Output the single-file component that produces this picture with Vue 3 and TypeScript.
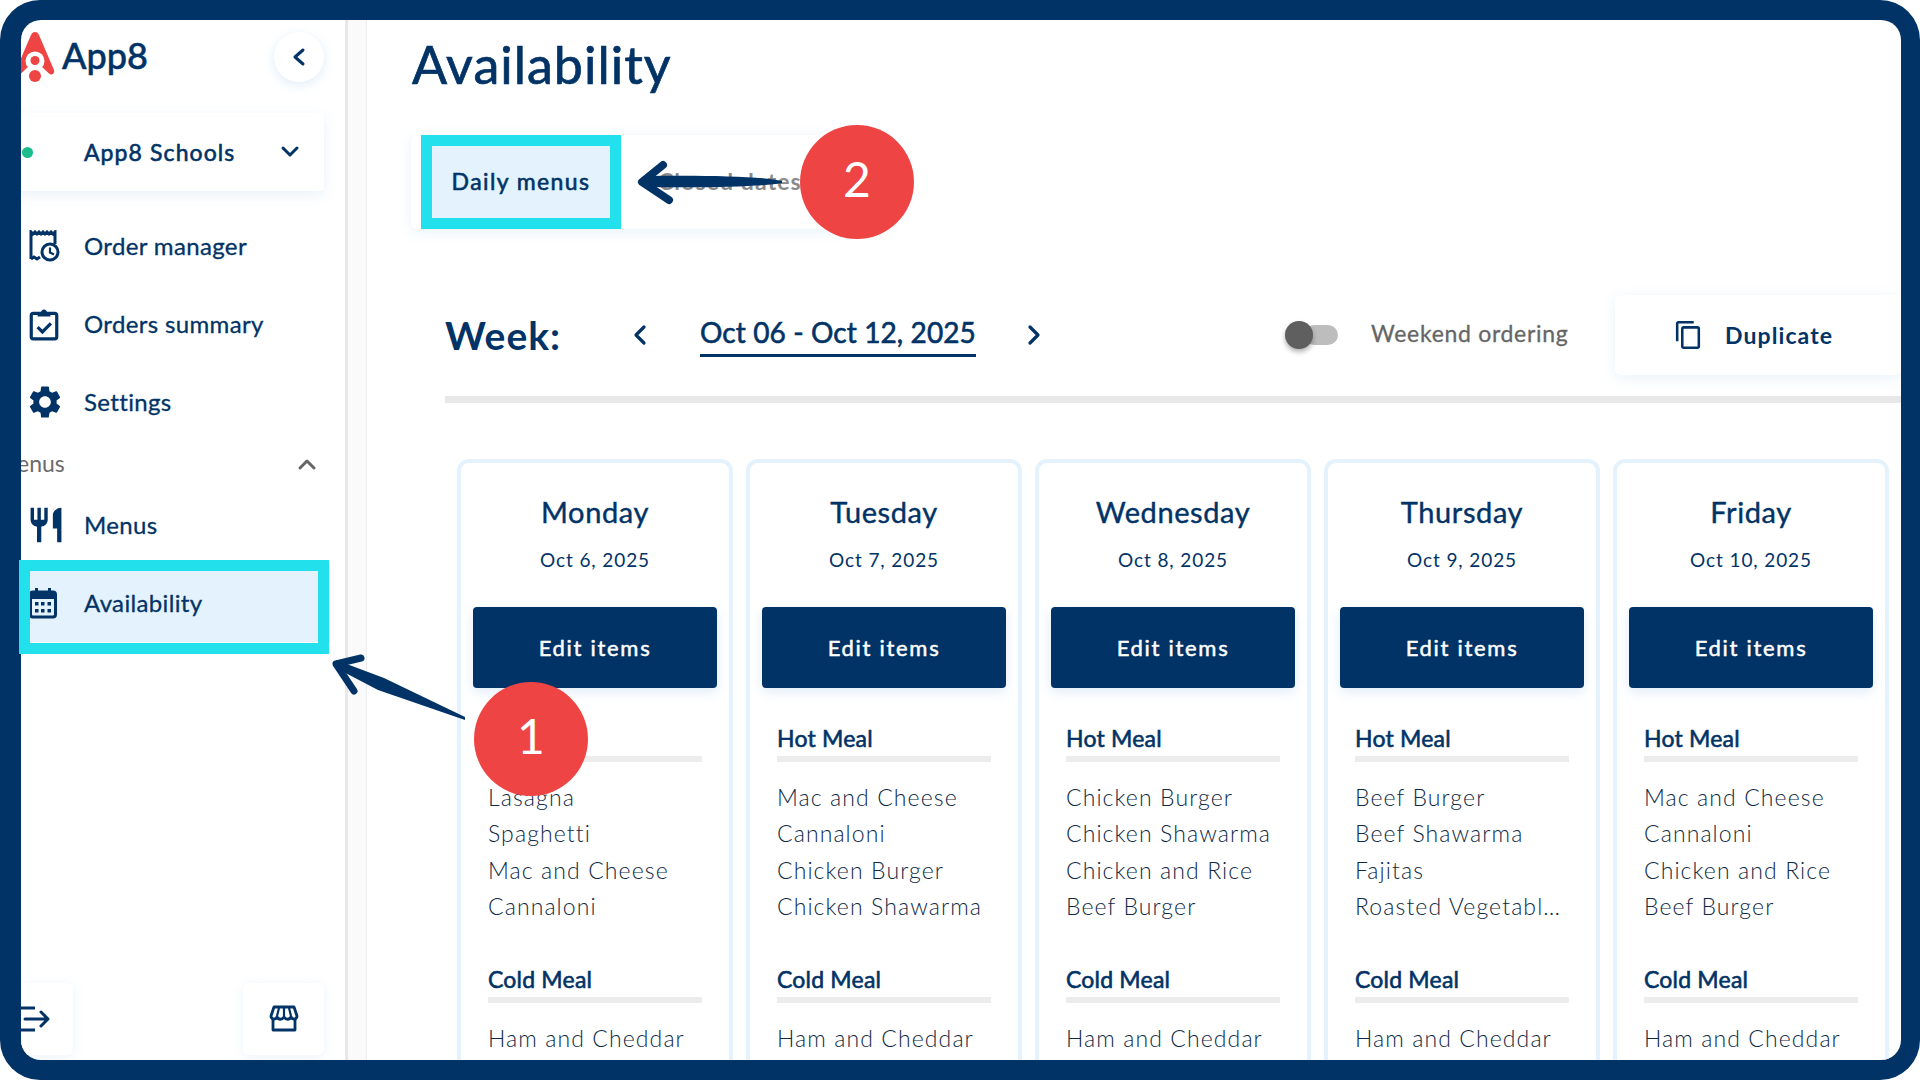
<script setup lang="ts">
const navItems = [
  { label: 'Order manager', icon: 'receipt' },
  { label: 'Orders summary', icon: 'clipboard' },
  { label: 'Settings', icon: 'gear' },
]
const days = [
  { name: 'Monday', date: 'Oct 6, 2025', hot: ['Lasagna', 'Spaghetti', 'Mac and Cheese', 'Cannaloni'] },
  { name: 'Tuesday', date: 'Oct 7, 2025', hot: ['Mac and Cheese', 'Cannaloni', 'Chicken Burger', 'Chicken Shawarma'] },
  { name: 'Wednesday', date: 'Oct 8, 2025', hot: ['Chicken Burger', 'Chicken Shawarma', 'Chicken and Rice', 'Beef Burger'] },
  { name: 'Thursday', date: 'Oct 9, 2025', hot: ['Beef Burger', 'Beef Shawarma', 'Fajitas', 'Roasted Vegetabl…'] },
  { name: 'Friday', date: 'Oct 10, 2025', hot: ['Mac and Cheese', 'Cannaloni', 'Chicken and Rice', 'Beef Burger'] },
]
</script>

<template>
  <div class="outer">
    <div class="frame">
      <aside class="sidebar">
        <div class="head">
          <div class="logo">
            <svg class="rocket" width="34" height="52" viewBox="0 0 34 52">
              <path d="M15 1C17 1 18 2 19 4L34 39C35 43 31.500 45 29 42.500L22 36H8L1 42.500C-1.500 45 -5 43 -4 39L11 4C12 2 13 1 15 1Z" fill="#ef4444" />
              <circle cx="15" cy="30" r="9.500" fill="#fff" />
              <circle cx="15" cy="29.500" r="4.500" fill="#ef4444" />
              <circle cx="15" cy="45" r="6" fill="#ef4444" />
            </svg>
            <span class="logo-text">App8</span>
          </div>
          <button class="collapse">
            <svg width="16" height="20" viewBox="0 0 16 20"><path d="M12 3L4 10L12 17" fill="none" stroke="#023366" stroke-width="3" stroke-linecap="round" stroke-linejoin="round" /></svg>
          </button>
        </div>

        <div class="school">
          <span class="dot"></span>
          <span class="school-name">App8 Schools</span>
          <svg class="school-chev" width="20" height="14" viewBox="0 0 20 14"><path d="M3 3L10 10L17 3" fill="none" stroke="#023366" stroke-width="3" stroke-linecap="round" stroke-linejoin="round" /></svg>
        </div>

        <nav class="nav">
          <div v-for="item in navItems" :key="item.label" class="nav-row">
            <span class="nav-icon">
              <svg v-if="item.icon === 'receipt'" width="32" height="32" viewBox="0 0 32 32">
                <path d="M3 29V2L5 4L7 2L9 4L11 2L13 4L15 2L17 4L19 2L21 4L23 2L25 4L27 2V14" fill="none" stroke="#023366" stroke-width="3" />
                <path d="M3 29L6 27L9 29L12 27" fill="none" stroke="#023366" stroke-width="3" />
                <circle cx="22" cy="22" r="8" fill="#fff" stroke="#023366" stroke-width="3" />
                <path d="M22 17.500V22.500L26 24.500" fill="none" stroke="#023366" stroke-width="2.200" />
              </svg>
              <svg v-else-if="item.icon === 'clipboard'" width="32" height="34" viewBox="0 0 30 32">
                <rect x="3" y="6" width="24" height="24" rx="2" fill="none" stroke="#023366" stroke-width="3" />
                <path d="M9 6H12C12 1 18 1 18 6H21V9H9Z" fill="#023366" />
                <path d="M9 19L13.500 23.500L21.500 15.500" fill="none" stroke="#023366" stroke-width="3" />
              </svg>
              <svg v-else width="34" height="34" viewBox="1.500 1.500 21 21">
                <path d="M19.140 12.940c.04-.3.06-.61.06-.94 0-.32-.02-.64-.07-.94l2.030-1.580c.18-.14.23-.41.12-.61l-1.920-3.320c-.12-.22-.37-.29-.59-.22l-2.390.96c-.5-.38-1.030-.7-1.620-.94l-.36-2.540c-.04-.24-.24-.41-.48-.41h-3.840c-.24 0-.43.17-.47.41l-.36 2.540c-.59.24-1.130.57-1.620.94l-2.390-.96c-.22-.08-.47 0-.59.22L2.740 8.870c-.12.21-.08.47.12.61l2.030 1.580c-.05.3-.09.63-.09.94s.02.64.07.94l-2.030 1.580c-.18.14-.23.41-.12.61l1.920 3.320c.12.22.37.29.59.22l2.390-.96c.5.38 1.030.7 1.620.94l.36 2.540c.05.24.24.41.48.41h3.840c.24 0 .44-.17.47-.41l.36-2.540c.59-.24 1.130-.56 1.620-.94l2.390.96c.22.08.47 0 .59-.22l1.920-3.320c.12-.22.07-.47-.12-.61l-2.010-1.580zM12 15.600c-1.980 0-3.600-1.620-3.600-3.600s1.620-3.600 3.600-3.600 3.600 1.620 3.600 3.600-1.620 3.600-3.600 3.600z" fill="#023366" />
              </svg>
            </span>
            <span class="nav-label">{{ item.label }}</span>
          </div>
          <div class="section-row">
            <span class="section-label">Menus</span>
            <svg width="20" height="14" viewBox="0 0 20 14"><path d="M3 11L10 4L17 11" fill="none" stroke="#666" stroke-width="3" stroke-linecap="round" stroke-linejoin="round" /></svg>
          </div>
          <div class="nav-row">
            <span class="nav-icon">
              <svg width="36" height="36" viewBox="2 1.500 20 21"><path d="M11 9H9V2H7v7H5V2H3v7c0 2.120 1.660 3.840 3.750 3.970V22h2.500v-9.030C11.340 12.840 13 11.120 13 9V2h-2v7zm5-3v8h2.500v8H21V2c-2.760 0-5 2.240-5 4z" fill="#023366" /></svg>
            </span>
            <span class="nav-label">Menus</span>
          </div>
          <div class="nav-row active">
            <span class="nav-icon">
              <svg width="30" height="34" viewBox="0 0 30 34">
                <rect x="2.500" y="6" width="25" height="25" rx="2.500" fill="none" stroke="#023366" stroke-width="3" />
                <rect x="2.500" y="6" width="25" height="7" fill="#023366" />
                <rect x="7" y="2" width="3" height="6" fill="#023366" />
                <rect x="20" y="2" width="3" height="6" fill="#023366" />
                <g fill="#023366">
                  <rect x="7" y="16" width="3.500" height="3.500" /><rect x="13" y="16" width="3.500" height="3.500" /><rect x="19.500" y="16" width="3.500" height="3.500" />
                  <rect x="7" y="23" width="3.500" height="3.500" /><rect x="13" y="23" width="3.500" height="3.500" /><rect x="19.500" y="23" width="3.500" height="3.500" />
                </g>
              </svg>
            </span>
            <span class="nav-label">Availability</span>
          </div>
        </nav>

        <div class="foot">
          <button class="foot-btn logout">
            <svg width="40" height="28" viewBox="0 0 40 28">
              <path d="M20 3H3V25H20" fill="none" stroke="#023366" stroke-width="3" />
              <path d="M10 14H33M26 7L33 14L26 21" fill="none" stroke="#023366" stroke-width="3" stroke-linecap="round" stroke-linejoin="round" />
            </svg>
          </button>
          <button class="foot-btn store">
            <svg width="30" height="28" viewBox="0 0 30 28">
              <path d="M5 2H25L28 11C28 14 24 15.500 22 12C20.500 15 17 15 15 12C13 15 9.500 15 8 12C6 15.500 2 14 2 11Z" fill="none" stroke="#023366" stroke-width="2.800" stroke-linejoin="round" />
              <path d="M4 14V25H26V14" fill="none" stroke="#023366" stroke-width="2.800" stroke-linejoin="round" />
              <path d="M10 3L8 11M15 3V11M20 3L22 11" fill="none" stroke="#023366" stroke-width="2.200" />
            </svg>
          </button>
        </div>
      </aside>

      <div class="strip"></div>

      <main class="main">
        <h1 class="title">Availability</h1>
        <div class="tabs">
          <div class="tab on">Daily menus</div>
          <div class="tab off">Closed dates</div>
        </div>

        <div class="week-block">
          <div class="week-row">
            <span class="week">Week:</span>
            <svg class="pager first" width="18" height="24" viewBox="0 0 18 24"><path d="M13 4L5 12L13 20" fill="none" stroke="#023366" stroke-width="3.200" stroke-linecap="round" stroke-linejoin="round" /></svg>
            <span class="range">Oct 06 - Oct 12, 2025</span>
            <svg class="pager" width="18" height="24" viewBox="0 0 18 24"><path d="M5 4L13 12L5 20" fill="none" stroke="#023366" stroke-width="3.200" stroke-linecap="round" stroke-linejoin="round" /></svg>
            <span class="toggle"><span class="track"></span><span class="knob"></span></span>
            <span class="toggle-label">Weekend ordering</span>
            <button class="dup">
              <svg width="26" height="28" viewBox="2 1 19 22"><path d="M16 1H4c-1.100 0-2 .9-2 2v14h2V3h12V1zm3 4H8c-1.100 0-2 .9-2 2v14c0 1.100.9 2 2 2h11c1.100 0 2-.9 2-2V7c0-1.100-.9-2-2-2zm0 16H8V7h11v14z" fill="#023366" /></svg>
              <span>Duplicate</span>
            </button>
          </div>
          <div class="divider"></div>
        </div>

        <div class="cards">
          <section v-for="d in days" :key="d.name" class="card">
            <div class="day">{{ d.name }}</div>
            <div class="date">{{ d.date }}</div>
            <button class="edit">Edit items</button>
            <div class="meal">
              <div class="meal-title">Hot Meal</div>
              <div class="rule"></div>
              <div v-for="m in d.hot" :key="m" class="item">{{ m }}</div>
            </div>
            <div class="meal cold">
              <div class="meal-title">Cold Meal</div>
              <div class="rule"></div>
              <div class="item">Ham and Cheddar</div>
            </div>
          </section>
        </div>
      </main>
    </div>

    <div class="hl hl-nav"></div>
    <div class="hl hl-tab"></div>
    <svg class="arrows" width="1920" height="1080" viewBox="0 0 1920 1080">
      <g fill="#023366">
        <path d="M336 660L384 678L465 717L465 720L378 690L336 668Z" />
        <path d="M645 176C700 175 760 176 782 181L782 183C760 187 700 188 645 187Z" />
      </g>
      <g fill="none" stroke="#023366" stroke-linecap="round" stroke-linejoin="round">
        <path d="M361 658L336 664L354 691" stroke-width="7" />
        <path d="M663 165L642 182L669 200" stroke-width="8" />
      </g>
    </svg>
    <div class="badge b1">1</div>
    <div class="badge b2">2</div>
  </div>
</template>

<style>
html, body { margin: 0; background: #fff; }
</style>

<style scoped>
.outer {
  position: relative;
  width: 1920px;
  height: 1080px;
  box-sizing: border-box;
  background: #023366;
  border-radius: 40px;
  padding: 20px 19px 20px 21px;
  font-family: Lato, "Open Sans", sans-serif;
  color: #023366;
}
.frame {
  height: 1040px;
  background: #fff;
  border-radius: 20px;
  overflow: hidden;
  display: flex;
}
button { font-family: inherit; border: 0; background: #fff; color: inherit; padding: 0; }

.sidebar {
  width: 303px;
  flex: none;
  padding-right: 21px;
  border-right: 3px solid #e8e8e8;
  display: flex;
  flex-direction: column;
}
.head { height: 74px; display: flex; align-items: center; justify-content: space-between; }
.logo { display: flex; align-items: center; gap: 8px; margin-left: -1px; }
.rocket { overflow: visible; }
.logo-text { font-size: 36px; font-weight: 500; line-height: 40px; margin-top: -4px; -webkit-text-stroke: 0.5px #023366; }
.collapse {
  width: 50px;
  height: 50px;
  border-radius: 50%;
  box-shadow: 0 3px 12px rgba(100, 160, 220, 0.2);
  display: flex;
  align-items: center;
  justify-content: center;
}
.school {
  margin: 19px 0 0 -10px;
  height: 78px;
  display: flex;
  align-items: center;
  background: #fff;
  box-shadow: 0 4px 14px rgba(100, 160, 220, 0.14);
  border-radius: 4px;
}
.dot { width: 11px; height: 11px; border-radius: 50%; background: #1abc8c; margin-left: 11px; }
.school-name { margin-left: 51px; font-size: 23px; font-weight: 400; letter-spacing: 1.1px; -webkit-text-stroke: 0.6px #023366; }
.school-chev { margin-left: auto; margin-right: 24px; }
.nav { margin-top: 16px; }
.nav-row { height: 78px; display: flex; align-items: center; }
.nav-icon { width: 38px; margin-left: 7px; height: 38px; display: flex; align-items: center; justify-content: flex-start; }
.nav-label { margin: -2px 0 0 18px; font-size: 24px; letter-spacing: 0.35px; -webkit-text-stroke: 0.3px #023366; }
.nav-row.active { background: #e3f2fd; margin-right: -6px; }
.section-row { height: 45px; display: flex; align-items: center; justify-content: space-between; padding-right: 7px; }
.section-label { margin: -2px 0 0 -25px; font-size: 23px; color: #6b6b6b; }
.foot { margin-top: auto; margin-bottom: 5px; display: flex; justify-content: space-between; }
.foot-btn { height: 72px; border-radius: 6px; box-shadow: 0 2px 12px rgba(100, 160, 220, 0.12); display: flex; align-items: center; }
.logout { width: 72px; margin-left: -20px; justify-content: flex-end; padding-right: 18px; box-sizing: border-box; }
.store { width: 81px; justify-content: center; }

.strip { width: 18px; flex: none; background: #fafafa; border-right: 1px solid #eee; }

.main { flex: 1; min-width: 0; overflow: hidden; padding-left: 45px; }
.title { margin: 19px 0 0; font-size: 52px; font-weight: 400; line-height: 50px; height: 50px; letter-spacing: 1px; -webkit-text-stroke: 0.7px #023366; }
.tabs {
  margin: 46px 0 0 -1px;
  height: 94px;
  width: 429px;
  display: flex;
  align-items: center;
  padding-left: 10px;
  box-sizing: border-box;
  box-shadow: 0 3px 14px rgba(100, 160, 220, 0.14);
  border-radius: 6px;
}
.tab { font-size: 23px; }
.tab.on { width: 200px; height: 94px; padding-bottom: 2px; box-sizing: border-box; display: flex; align-items: center; justify-content: center; background: #e3f2fd; font-weight: 400; letter-spacing: 1.4px; -webkit-text-stroke: 0.6px #023366; }
.tab.off { margin: -2px 0 0 37px; color: #8a8a8a; font-weight: 700; letter-spacing: 1.1px; }

.week-block { margin: 66px 0 0 33px; }
.week-row { display: flex; align-items: center; height: 80px; }
.week { width: 114px; font-size: 39px; font-weight: 700; letter-spacing: 1px; }
.pager { flex: none; margin-left: 49px; }
.pager.first { margin-left: 72px; }
.range { margin-left: 51px; width: 276px; height: 47px; line-height: 44px; white-space: nowrap; font-size: 28px; font-weight: 400; -webkit-text-stroke: 0.6px #023366; border-bottom: 3.500px solid #023366; box-sizing: border-box; margin-top: -4px; letter-spacing: 0.1px; }
.toggle { position: relative; width: 53px; height: 28px; margin-left: 242px; flex: none; }
.track { position: absolute; right: 0; top: 4px; width: 34px; height: 20px; border-radius: 10px; background: #bdbdbd; }
.knob { position: absolute; left: 0; top: 0; width: 28px; height: 28px; border-radius: 50%; background: #5f5f5f; box-shadow: 0 3px 5px rgba(0, 0, 0, 0.3); }
.toggle-label { margin: -4px 0 0 33px; font-size: 23px; font-weight: 400; letter-spacing: 0.7px; -webkit-text-stroke: 0.3px #666; color: #666; white-space: nowrap; }
.dup {
  margin-left: auto;
  width: 286px;
  height: 80px;
  flex: none;
  display: flex;
  align-items: center;
  padding-left: 60px;
  box-sizing: border-box;
  gap: 24px;
  font-size: 23px;
  font-weight: 700;
  letter-spacing: 1.1px;
  box-shadow: 0 3px 14px rgba(100, 160, 220, 0.14);
  border-radius: 6px;
}
.divider { height: 7px; margin-top: 21px; background: #e8e8e8; }

.cards { display: flex; gap: 13px; margin: 56px 0 0 45px; }
.card {
  width: 276px;
  flex: none;
  box-sizing: border-box;
  height: 700px;
  padding: 31px 12px 0;
  border: 4px solid #e3f2fd;
  border-radius: 12px;
  text-align: center;
}
.day { font-size: 29px; line-height: 36px; letter-spacing: 0.6px; -webkit-text-stroke: 0.4px #023366; }
.date { margin-top: 18px; font-size: 19px; line-height: 24px; letter-spacing: 0.9px; }
.edit {
  margin-top: 35px;
  width: 100%;
  height: 81px;
  background: #023366;
  color: #fff;
  border-radius: 4px;
  font-size: 22px;
  font-weight: 400;
  letter-spacing: 1.7px;
  -webkit-text-stroke: 0.5px #fff;
  box-shadow: 0 4px 12px rgba(100, 160, 220, 0.2);
}
.meal { margin: 36px 15px 0; text-align: left; }
.meal.cold { margin-top: 41px; }
.meal-title { font-size: 23px; line-height: 28px; font-weight: 400; letter-spacing: 0.2px; -webkit-text-stroke: 0.6px #023366; }
.rule { margin: 4px 0 17px; height: 6px; background: #ececec; }
.item { font-size: 23px; line-height: 36.300px; font-weight: 300; letter-spacing: 1.1px; white-space: nowrap; color: #0f2a44; }

.hl { position: absolute; box-sizing: border-box; border: 11px solid #22e0ec; }
.hl-nav { left: 19px; top: 560px; width: 310px; height: 94px; }
.hl-tab { left: 421px; top: 135px; width: 200px; height: 94px; }
.arrows { position: absolute; left: 0; top: 0; pointer-events: none; }
.badge {
  position: absolute;
  width: 114px;
  height: 114px;
  box-sizing: border-box;
  padding-bottom: 7px;
  border-radius: 50%;
  background: #ef4444;
  color: #fff;
  font-size: 48px;
  font-weight: 400;
  display: flex;
  align-items: center;
  justify-content: center;
}
.b1 { left: 474px; top: 682px; }
.b2 { left: 800px; top: 125px; }
</style>
